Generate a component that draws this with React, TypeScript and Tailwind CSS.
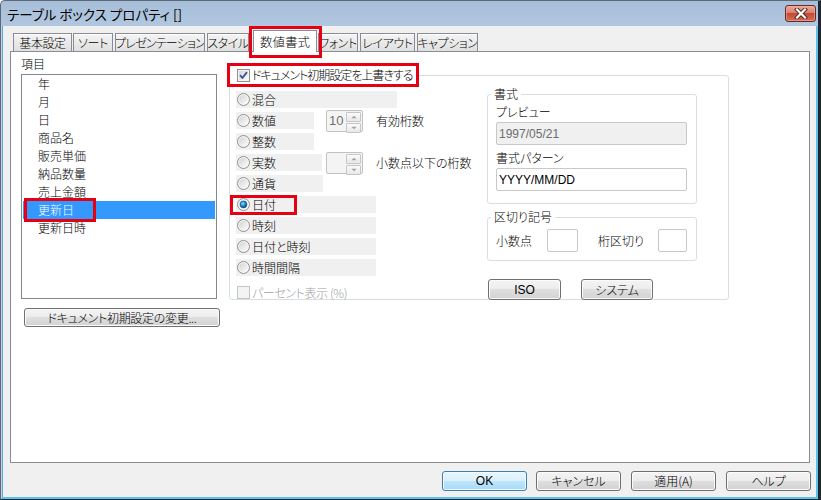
import React from 'react';

const TABS = [
  {label: '基本設定', cls: 'w-[59px]'},
  {label: 'ソート', cls: 'ml-[1px] w-[40px]'},
  {label: 'プレゼンテーション', cls: 'ml-[2px] w-[90px] text-[11px] tracking-[-0.8px]'},
  {label: 'スタイル', cls: 'ml-[2px] w-[42px] text-[11.5px]'},
  {label: '数値書式', cls: 'ml-[4px] w-[64px]', active: true},
  {label: 'フォント', cls: 'ml-[1px] w-[40px] text-[11.5px]'},
  {label: 'レイアウト', cls: 'ml-[2px] w-[55px]'},
  {label: 'キャプション', cls: 'ml-[2px] w-[61px]'},
];

const ITEMS = ['年', '月', '日', '商品名', '販売単価', '納品数量', '売上金額', '更新日', '更新日時'];

const RADIOS = [
  {label: '混合', bg: 'w-[161px]'},
  {label: '数値', bg: 'w-[78px]', spin: '10', spinMl: 'ml-[12px]', note: '有効桁数'},
  {label: '整数', bg: 'w-[78px]'},
  {label: '実数', bg: 'w-[86px]', spin: '', spinMl: 'ml-[4px]', note: '小数点以下の桁数'},
  {label: '通貨', bg: 'w-[87px]'},
  {label: '日付', bg: 'w-[140px]', checked: true},
  {label: '時刻', bg: 'w-[140px]'},
  {label: '日付と時刻', bg: 'w-[140px]'},
  {label: '時間間隔', bg: 'w-[140px]'},
];

const BTN =
  'border border-[#707070] rounded-[3px] bg-[linear-gradient(#f4f4f4,#ececec_50%,#dfdfdf_50%,#d2d2d2)] shadow-[inset_0_0_0_1px_#fbfbfb] flex items-center justify-center text-[12px] leading-[14px]';

function RadioIcon({checked}: {checked?: boolean}) {
  return (
    <svg width="13" height="13" viewBox="0 0 13 13" className="shrink-0">
      <defs>
        <linearGradient id="rfill" x1="0" y1="0" x2="1" y2="1">
          <stop offset="0" stopColor="#d2d2d2" />
          <stop offset="1" stopColor="#fdfdfd" />
        </linearGradient>
        <radialGradient id="rdot" cx="0.4" cy="0.35" r="0.7">
          <stop offset="0" stopColor="#8fe0ff" />
          <stop offset="0.5" stopColor="#1f8ad6" />
          <stop offset="1" stopColor="#0b3f7a" />
        </radialGradient>
      </defs>
      <circle cx="6.5" cy="6.5" r="6" fill="#f6f6f6" stroke="#8e8f8f" />
      <circle cx="6.5" cy="6.5" r="4.5" fill="url(#rfill)" />
      {checked && <circle cx="6.5" cy="6.5" r="3.4" fill="url(#rdot)" stroke="#19446f" strokeWidth="0.6" />}
    </svg>
  );
}

function CheckIcon({checked, disabled}: {checked?: boolean; disabled?: boolean}) {
  return (
    <svg width="13" height="13" viewBox="0 0 13 13" className="shrink-0">
      <defs>
        <linearGradient id="cfill" x1="0" y1="0" x2="1" y2="1">
          <stop offset="0" stopColor="#d6d6d6" />
          <stop offset="1" stopColor="#fbfbfb" />
        </linearGradient>
      </defs>
      <rect x="0.5" y="0.5" width="12" height="12" fill="#f4f4f4" stroke={disabled ? '#c4c4c4' : '#8e8f8f'} />
      <rect x="2" y="2" width="9" height="9" fill={disabled ? '#f4f4f4' : 'url(#cfill)'} />
      {checked && (
        <path d="M3 6.2 L5.4 9 L10 3.2" fill="none" stroke="#3f5394" strokeWidth="1.9" strokeLinejoin="round" />
      )}
    </svg>
  );
}

function Spinner({value}: {value: string}) {
  return (
    <div className="flex w-[37px] h-[22px] shrink-0 border border-[#c2c2c2] rounded-[2px] bg-[#f4f4f4]">
      <div className="flex-1 pl-[2px] leading-[20px] text-[13px] text-[#707070] font-['Liberation_Sans',sans-serif]">
        {value}
      </div>
      <div className="w-[16px] flex flex-col gap-[1px] py-[1px] pr-[1px]">
        {['M3 6 L6 3 L9 6 Z', 'M3 3 L6 6 L9 3 Z'].map((d) => (
          <div
            key={d}
            className="flex-1 border border-[#c6c6c6] rounded-[1px] bg-[linear-gradient(#fafafa,#e8e8e8)] flex items-center justify-center"
          >
            <svg width="12" height="8" viewBox="0 0 12 9">
              <path d={d} fill="#a0a0a0" />
            </svg>
          </div>
        ))}
      </div>
    </div>
  );
}

function Field({children, gray}: {children?: React.ReactNode; gray?: boolean}) {
  return (
    <div
      className={`h-[23px] border border-[#c8c8c8] rounded-[2px] px-[2px] flex items-center text-[12px] font-['Liberation_Sans',sans-serif] ${
        gray ? 'bg-[#f0f0f0] text-[#6d6d6d]' : 'bg-white text-black'
      }`}
    >
      {children}
    </div>
  );
}

export default function App() {
  return (
    <div className="w-[821px] h-[500px] flex flex-col bg-[linear-gradient(#a7bed9,#c0d4ea_60px)] border-t border-l border-[#5d6876] border-r-[3px] border-r-[#20272e] border-b border-b-[#20272e] rounded-tl-[5px] font-['Noto_Sans_CJK_JP',sans-serif] font-light [font-feature-settings:'palt'] text-black">
      {/* title bar */}
      <div className="h-[25px] flex items-start pl-[6px] pr-[2px]">
        <span className="mt-[4px] text-[13.5px] leading-[18px] font-normal">テーブル ボックス プロパティ []</span>
        <div className="ml-auto mt-[4px] w-[31px] h-[17px] rounded-[3px] border border-[#6b2a22] bg-[linear-gradient(#e9aa9b,#d8816d_45%,#c44a33_50%,#d0705a)] shadow-[inset_0_0_0_1px_#f0b8aa80] flex items-center justify-center">
          <svg width="14" height="11" viewBox="0 0 14 11">
            <path d="M3 1.5 L11 9.5 M11 1.5 L3 9.5" stroke="#5a2018" strokeWidth="4" strokeLinecap="square" />
            <path d="M3 1.5 L11 9.5 M11 1.5 L3 9.5" stroke="#ffffff" strokeWidth="2.2" strokeLinecap="square" />
          </svg>
        </div>
      </div>

      {/* frame + client */}
      <div className="flex-1 flex flex-col border-l border-l-[#c6d6e8] border-r-2 border-r-[#5cc0ec] border-b-2 border-b-[#5cc0ec]">
        <div className="flex-1 flex flex-col border-l border-l-[#5aa6dc] bg-[#f0f0f0]">
          {/* tabs */}
          <div className="mt-[4px] h-[21px] flex items-end pl-[10px]">
            {TABS.map((t) =>
              t.active ? (
                <div
                  key={t.label}
                  className={`${t.cls} relative z-10 h-[22px] -mb-[1px] bg-white border border-b-0 border-[#898c95] flex items-center justify-center text-[12.5px] leading-[14px]`}
                >
                  {t.label}
                  <div className="absolute left-[-5px] top-[-5px] w-[73px] h-[32px] border-[3px] border-[#e60012]" />
                </div>
              ) : (
                <div
                  key={t.label}
                  className={`text-[12px] tracking-[-0.4px] ${t.cls} h-[18px] border border-b-0 border-[#898c95] bg-[linear-gradient(#f4f4f4,#e0e0e0)] shadow-[inset_0_1px_0_#ffffff] flex items-center justify-center leading-[14px] whitespace-nowrap overflow-hidden`}
                >
                  {t.label}
                </div>
              ),
            )}
          </div>

          {/* panel */}
          <div className="ml-[7px] w-[800px] h-[412px] bg-white border border-[#898c95] flex items-start pl-[10px] pt-[5px]">
            {/* left column */}
            <div className="w-[199px] shrink-0">
              <div className="h-[14px] leading-[14px] text-[12px]">項目</div>
              <div className="mt-[3px] w-[196px] h-[225px] border border-[#828790] bg-white">
                {ITEMS.map((it) =>
                  it === '更新日' ? (
                    <div
                      key={it}
                      className="relative mx-[1px] h-[18px] leading-[18px] pl-[15px] text-[12px] bg-[#3399ff] text-white"
                    >
                      {it}
                      <div className="absolute left-[1px] top-[-3px] w-[72px] h-[24px] border-[3px] border-[#e60012]" />
                    </div>
                  ) : (
                    <div key={it} className="h-[18px] leading-[18px] pl-[16px] text-[12px]">
                      {it}
                    </div>
                  ),
                )}
              </div>
              <div className={`${BTN} mt-[9px] ml-[3px] w-[196px] h-[19px] tracking-[-0.3px]`}>
                ドキュメント初期設定の変更...
              </div>
            </div>

            {/* format group */}
            <fieldset className="ml-[9px] mt-[6px] w-[500px] h-[237px] border border-[#d5dfe5] rounded-[3px] p-0 min-w-0">
              <legend className="-ml-[3px] w-[192px] h-[24px] border-[3px] border-[#e60012] pl-[7px] flex items-center text-[12px] leading-[14px]">
                <CheckIcon checked />
                <span className="ml-[2px] whitespace-nowrap tracking-[-1px]">ドキュメント初期設定を上書きする</span>
              </legend>
              <div className="flex">
                {/* radios */}
                <div className="w-[257px] shrink-0 pl-[6px] pt-[4px] flex flex-col">
                  <div className="flex flex-col gap-[4px]">
                    {RADIOS.map((r) => (
                      <div key={r.label} className="h-[17px] flex items-center text-[12px] leading-[14px]">
                        <div className={`${r.bg} relative h-full bg-[#f0f0f0] flex items-center pl-[1px] shrink-0`}>
                          <RadioIcon checked={r.checked} />
                          <span className="ml-[2px] whitespace-nowrap">{r.label}</span>
                          {r.checked && (
                            <div className="absolute left-[-6px] top-[-1px] w-[67px] h-[20px] border-[3px] border-[#e60012]" />
                          )}
                        </div>
                        {r.spin !== undefined && (
                          <>
                            <div className={r.spinMl}>
                              <Spinner value={r.spin} />
                            </div>
                            <span className="ml-[13px] whitespace-nowrap">{r.note}</span>
                          </>
                        )}
                      </div>
                    ))}
                  </div>
                  <div className="mt-[8px] h-[17px] flex items-center pl-[1px] text-[12px] leading-[14px] text-[#a0a0a0]">
                    <CheckIcon disabled />
                    <span className="ml-[2px] tracking-[-0.4px]">パーセント表示 (%)</span>
                  </div>
                </div>

                {/* right column */}
                <div className="w-[210px] shrink-0">
                  <fieldset className="w-[210px] h-[117px] border border-[#d5dfe5] rounded-[3px] p-0 pl-[8px] m-0 min-w-0">
                    <legend className="ml-[-5px] px-[3px] h-[14px] leading-[14px] text-[12px]">書式</legend>
                    <div className="mt-[4px] h-[14px] leading-[14px] text-[12px]">プレビュー</div>
                    <div className="mt-[3px] w-[191px]">
                      <Field gray>1997/05/21</Field>
                    </div>
                    <div className="mt-[6px] h-[14px] leading-[14px] text-[12px]">書式パターン</div>
                    <div className="mt-[3px] w-[191px]">
                      <Field>YYYY/MM/DD</Field>
                    </div>
                  </fieldset>

                  <fieldset className="mt-[6px] w-[210px] h-[51px] border border-[#d5dfe5] rounded-[3px] p-0 pl-[8px] m-0 min-w-0">
                    <legend className="ml-[-5px] px-[3px] h-[14px] leading-[14px] text-[12px]">区切り記号</legend>
                    <div className="mt-[5px] flex items-center text-[12px] leading-[14px]">
                      <span className="w-[51px]">小数点</span>
                      <div className="w-[31px]">
                        <Field />
                      </div>
                      <span className="ml-[20px] w-[60px]">桁区切り</span>
                      <div className="w-[29px]">
                        <Field />
                      </div>
                    </div>
                  </fieldset>

                  <div className="mt-[18px] flex pl-[1px]">
                    <div className={`${BTN} w-[73px] h-[21px] font-['Liberation_Sans',sans-serif] font-normal`}>ISO</div>
                    <div className={`${BTN} ml-[20px] w-[72px] h-[21px]`}>システム</div>
                  </div>
                </div>
              </div>
            </fieldset>
          </div>

          {/* dialog buttons */}
          <div className="mt-[8px] flex justify-end pr-[5px]">
            <div className="w-[85px] h-[20px] border border-[#3c7fb1] rounded-[3px] bg-[linear-gradient(#eaf6fd,#d9f0fc_50%,#bee6fd_50%,#a7d9f5)] shadow-[inset_0_0_0_1px_#f0faff] flex items-center justify-center text-[12px] leading-[14px] font-['Liberation_Sans',sans-serif] font-normal">
              OK
            </div>
            <div className={`${BTN} ml-[9px] w-[85px] h-[20px]`}>キャンセル</div>
            <div className={`${BTN} ml-[10px] w-[85px] h-[20px]`}>適用(A)</div>
            <div className={`${BTN} ml-[10px] w-[85px] h-[20px]`}>ヘルプ</div>
          </div>
        </div>
      </div>
    </div>
  );
}
